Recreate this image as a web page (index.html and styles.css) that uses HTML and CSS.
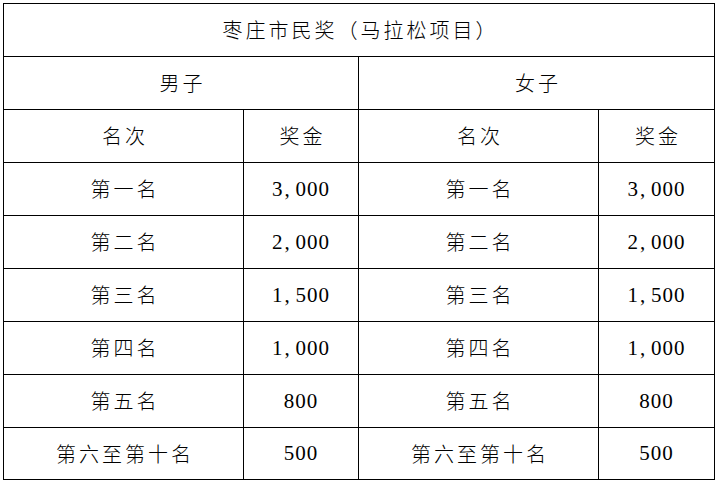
FILE: index.html
```html
<!DOCTYPE html>
<html lang="zh-CN">
<head>
<meta charset="utf-8">
<title>枣庄市民奖（马拉松项目）</title>
<link rel="stylesheet" href="styles.css">
</head>
<body>
<table class="prize">
  <colgroup>
    <col class="c-rank">
    <col class="c-amt">
    <col class="c-rank">
    <col class="c-amt2">
  </colgroup>
  <tr><td colspan="4" class="zh">枣庄市民奖（马拉松项目）</td></tr>
  <tr><td colspan="2" class="zh">男子</td><td colspan="2" class="zh">女子</td></tr>
  <tr><td class="zh">名次</td><td class="zh">奖金</td><td class="zh">名次</td><td class="zh">奖金</td></tr>
  <tr><td class="zh">第一名</td><td class="num">3<span class="cm">,</span>000</td><td class="zh">第一名</td><td class="num">3<span class="cm">,</span>000</td></tr>
  <tr><td class="zh">第二名</td><td class="num">2<span class="cm">,</span>000</td><td class="zh">第二名</td><td class="num">2<span class="cm">,</span>000</td></tr>
  <tr><td class="zh">第三名</td><td class="num">1<span class="cm">,</span>500</td><td class="zh">第三名</td><td class="num">1<span class="cm">,</span>500</td></tr>
  <tr><td class="zh">第四名</td><td class="num">1<span class="cm">,</span>000</td><td class="zh">第四名</td><td class="num">1<span class="cm">,</span>000</td></tr>
  <tr><td class="zh">第五名</td><td class="num">800</td><td class="zh">第五名</td><td class="num">800</td></tr>
  <tr class="last"><td class="zh">第六至第十名</td><td class="num">500</td><td class="zh">第六至第十名</td><td class="num">500</td></tr>
</table>
</body>
</html>
```
FILE: styles.css
```css
html, body {
  margin: 0;
  padding: 0;
  background: #fff;
}
body {
  padding: 3px 0 0 3px;
}
.prize {
  border-collapse: collapse;
  table-layout: fixed;
  width: 712px;
  color: #000;
}
.c-rank { width: 240px; }
.c-amt { width: 115px; }
.c-amt2 { width: 116px; }
.prize tr { height: 53px; }
.prize tr.last { height: 52px; }
.prize td {
  border: 1px solid #000;
  padding: 0;
  text-align: center;
  vertical-align: middle;
  line-height: 1;
}
.zh {
  font-family: "Noto Sans CJK SC", sans-serif;
  font-weight: 300;
  font-size: 20px;
  letter-spacing: 3px;
  padding-left: 3px !important;
}
.num {
  font-family: "Liberation Serif", serif;
  font-size: 21px;
  letter-spacing: 1px;
}
.cm {
  display: inline-block;
  width: 11px;
  text-align: left;
  padding-left: 1px;
}
```
